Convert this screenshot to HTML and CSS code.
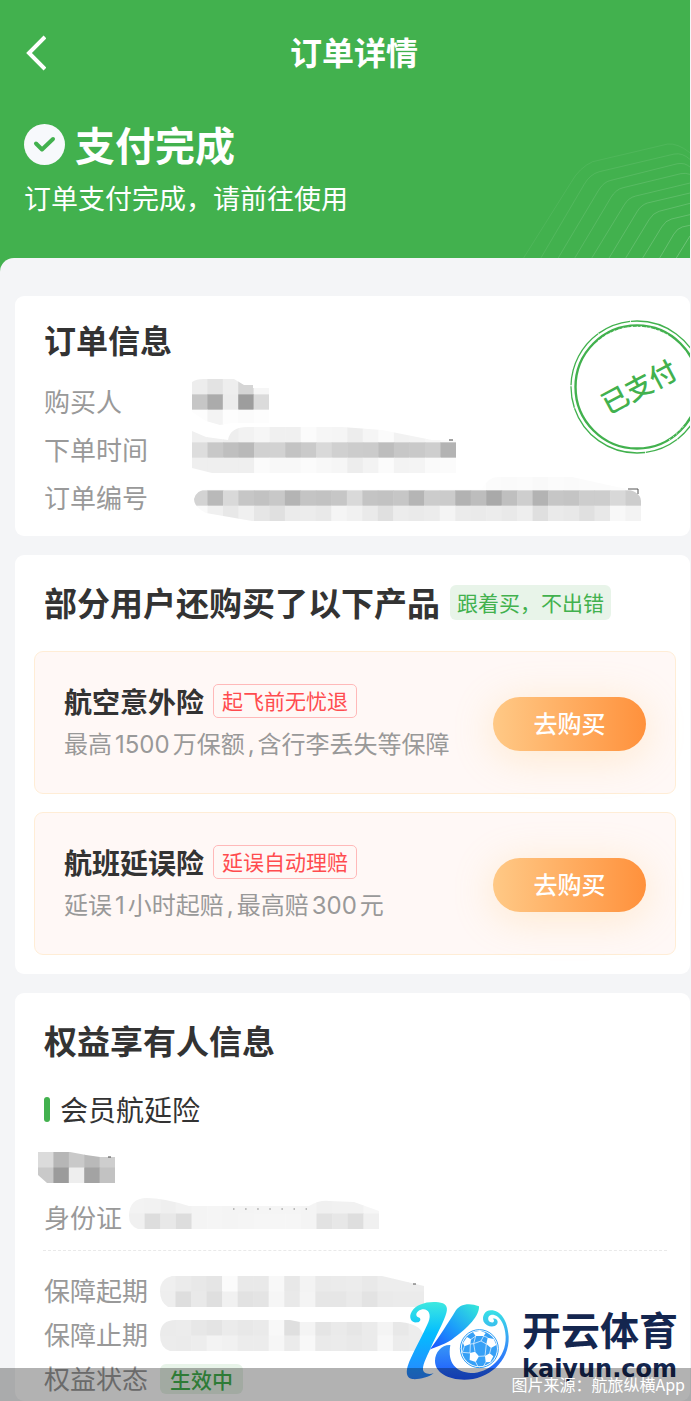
FILE: index.html
```html
<!DOCTYPE html>
<html lang="zh-CN">
  <head>
    <meta charset="UTF-8" />
    <meta name="viewport" content="width=device-width, initial-scale=1.0" />
    <title>订单详情</title>
    <link rel="stylesheet" href="styles.css">
  </head>

  <body>
    <div class="page">
      <header class="header">
        <svg class="header-lines" viewBox="260 60 523 351" fill="none" stroke="#fff" stroke-width="3">
          <path opacity=".07" d="M283 411L425 185Q450 140 490 122L715 69Q745 65 783 95" />
          <path opacity=".09" d="M335 411L465 190Q482 160 510 152L735 99Q760 94 783 115" />
          <path opacity=".11" d="M387 411L508 208Q524 182 545 178L745 128Q768 124 783 138" />
          <path opacity=".12" d="M437 411L545 230Q560 205 582 200L755 158Q770 155 783 160" />
          <path opacity=".13" d="M488 411L585 252Q598 230 620 225L783 186" />
          <path opacity=".15" d="M540 411L624 272Q636 252 655 246L783 216" />
          <path opacity=".16" d="M590 411L660 296Q672 276 690 271L783 247" />
          <path opacity=".18" d="M641 411L698 318Q710 298 728 294L783 281" />
          <path opacity=".2" d="M692 411L734 340Q745 322 760 318L783 313" />
          <path opacity=".24" d="M742 411L783 345" />
        </svg>
        <nav class="nav">
          <button class="back" type="button" aria-label="返回">
            <svg width="20" height="36" viewBox="0 0 20 36" fill="none" stroke="#fff" stroke-width="4">
              <path d="M19 2L3 18L19 34" />
            </svg>
          </button>
          <h1 class="nav-title">订单详情</h1>
        </nav>
        <div class="status">
          <svg width="41" height="41" viewBox="0 0 41 41">
            <circle cx="20.5" cy="20.5" r="20.5" fill="#f7f9fc" />
            <path d="M12 19.5L18 25.5L29 15" fill="none" stroke="#42b14e" stroke-width="4" stroke-linecap="round" stroke-linejoin="round" />
          </svg>
          <h2 class="status-title">支付完成</h2>
        </div>
        <p class="status-text">订单支付完成，请前往使用</p>
      </header>

      <main class="main">
        <section class="card order">
          <h2 class="order-title">订单信息</h2>
          <dl class="rows">
            <div class="row">
              <dt>购买人</dt>
              <dd><svg class="mosaic" width="77" height="46" data-clip="M0 3Q4 0 12 0H42L52 6H61V9H77V44H40L28 46L14 42L0 33Z" data-rows="ed e3 ee d5 f6|c6 ab ec 9d db|fd f3 fd fb fd"></svg></dd>
            </div>
            <div class="row">
              <dt>下单时间</dt>
              <dd><svg class="mosaic" width="264" height="46" data-clip="M0 4L14 10L36 13Q38 0 56 0H150L190 3L240 13H264V46H20L0 41Z" data-rows="f0 f0 ee f2 f6 f0 f0 fb f6 f5 ed f5 fb f2 f3 f6 fb|dd c8 bf b9 d1 d2 c3 ca d9 d0 cc cb bd c7 c9 ce b3|ef ef ef ef fb f8 f8 fb f8 f6 ed f3 fb f3 f4 fa fb"><path d="M257 13H261" stroke="#444" /></svg></dd>
            </div>
            <div class="row">
              <dt>订单编号</dt>
              <dd><svg class="mosaic" width="449" height="46" data-clip="M2 24Q4 15 16 14H290Q296 2 306 2H380L425 12Q449 15 449 26V46H60L14 38Q2 32 2 24Z" data-rows="fe fe fe fe fe fe fe fe fe fe fe fe fe fe fe fe fe fe fe fb fa fb f9 fb fa fb fb fc fe|d3 b9 d9 c6 c2 c8 b4 c4 c2 c6 d9 c4 c2 c6 b5 cc cb b2 bd a9 bf ce b3 c6 c4 cd cd d8 cd|fa f0 e8 f0 e6 e0 eb ec e9 f5 f1 ea e0 ec ea ec f4 eb ea ec e9 ee df ea e8 e0 e8 f8 f3"><path d="M436 14H446V19" fill="none" stroke="#555" /></svg></dd>
            </div>
          </dl>
          <svg class="stamp" width="136" height="136" viewBox="0 0 136 136">
            <g fill="none" stroke="#42b14e">
              <circle cx="68" cy="68" r="66" stroke-width="1.3" stroke-dasharray="60 .6 34 .8 90 .5 22 1" />
              <circle cx="68" cy="68" r="61.5" stroke-width="2.4" />
            </g>
            <g fill="none" stroke="#fff" stroke-dasharray="1.5 4 .7 3">
              <path d="M29 22A60 60 0 0 1 102 18" />
              <path d="M100 121A62 62 0 0 0 116 105" />
            </g>
            <text x="70" y="78" text-anchor="middle" transform="rotate(-28 70 68)">已支付</text>
          </svg>
        </section>

        <section class="card">
          <div class="card-head">
            <h2 class="card-title">部分用户还购买了以下产品</h2>
            <span class="badge">跟着买，不出错</span>
          </div>
          <ul class="products">
            <li class="product">
              <div>
                <div class="product-head">
                  <h3>航空意外险</h3>
                  <span class="tag">起飞前无忧退</span>
                </div>
                <p class="product-desc">最高1500万保额,含行李丢失等保障</p>
              </div>
              <button class="buy" type="button">去购买</button>
            </li>
            <li class="product">
              <div>
                <div class="product-head">
                  <h3>航班延误险</h3>
                  <span class="tag">延误自动理赔</span>
                </div>
                <p class="product-desc">延误1小时起赔,最高赔300元</p>
              </div>
              <button class="buy" type="button">去购买</button>
            </li>
          </ul>
        </section>

        <section class="card holder">
          <div class="card-head">
            <h2 class="card-title">权益享有人信息</h2>
          </div>
          <h3 class="plan">会员航延险</h3>
          <svg class="mosaic holder-name" width="77" height="31" data-clip="M0 0H32L48 3L62 5H77V31H9L0 23Z" data-rows="db b6 c9 b9 ce|c9 9b ee a3 c2"><path d="M70 5H73" stroke="#444" /></svg>
          <dl class="rows rows-tight">
            <div class="row row-id">
              <dt>身份证</dt>
              <dd><svg class="mosaic" width="250" height="31" data-clip="M0 18Q0 0 18 0Q34 0 60 8H180Q190 2 200 3L225 4L250 13V31H9Q0 28 0 18Z" data-rows="f3 f2 ef f2 f4 f5 f4 f4 f5 f5 f5 f4 f0 f1 f1 f6|f0 dd e8 dd f4 f5 f4 f5 f6 f6 f6 f4 e2 e7 de f0"><path d="M104 11H178" stroke="#bbb" stroke-width="2" stroke-dasharray="1.5 10.6" /></svg></dd>
            </div>
          </dl>
          <hr class="divider" />
          <dl class="rows rows-tight">
            <div class="row">
              <dt>保障起期</dt>
              <dd><svg class="mosaic" width="264" height="31" data-clip="M0 15Q0 3 12 0H222L264 10V31H8Q0 26 0 15Z" data-rows="ef eb e8 e5 fb e9 e9 f8 e8 f3 ea eb ec e9 ed ed ed|ee de e9 df f1 e2 e4 f6 e9 f4 e6 e6 ea e3 ea eb eb"><path d="M253 8H256" stroke="#555" /></svg></dd>
            </div>
            <div class="row">
              <dt>保障止期</dt>
              <dd><svg class="mosaic" width="264" height="31" data-clip="M0 15Q0 0 16 0H130L140 2H240Q264 4 264 20V31H10Q0 28 0 15Z" data-rows="eb ec e7 e4 eb e8 ea f8 df f4 e5 ea e6 eb f4 e8 ed|ec eb ed f3 f1 ec ec f6 eb f8 ea eb e9 eb f7 ec ed"></svg></dd>
            </div>
            <div class="row">
              <dt>权益状态</dt>
              <dd><span class="badge badge-small">生效中</span></dd>
            </div>
          </dl>
        </section>
      </main>

      <div class="caption">图片来源：航旅纵横App</div>

      <div class="brand">
        <svg width="115" height="90" viewBox="0 0 345 270">
          <defs>
            <linearGradient id="stem" x1="0" y1="0" x2="0" y2="1">
              <stop offset="0" stop-color="#3fe9e0" />
              <stop offset=".4" stop-color="#04bdff" />
              <stop offset="1" stop-color="#2a83ff" />
            </linearGradient>
            <linearGradient id="arm" x1="1" y1="0" x2="0" y2="1">
              <stop offset="0" stop-color="#36ead8" />
              <stop offset=".5" stop-color="#1c9ffa" />
              <stop offset="1" stop-color="#1b4dff" />
            </linearGradient>
            <linearGradient id="bowl" x1="0" y1="0" x2="0" y2="1">
              <stop offset="0" stop-color="#38e2e6" />
              <stop offset=".45" stop-color="#3a9cf5" />
              <stop offset="1" stop-color="#1b55ff" />
            </linearGradient>
          </defs>
          <path fill="url(#arm)" d="M86 164C112 130 146 76 162 50C174 28 204 22 234 34C236 60 204 98 152 134C124 152 100 156 86 164Z" />
          <path fill="url(#stem)" d="M50 66C62 68 60 82 48 82C30 84 22 66 32 50C44 28 80 18 112 22C134 24 142 36 136 54C130 78 104 124 84 170C70 200 60 222 70 232C78 238 90 238 98 234C84 248 50 254 34 252C18 250 14 236 20 214C30 182 66 120 82 82C94 54 78 38 60 44C46 48 42 60 50 66Z" />
          <path fill="url(#bowl)" d="M148 150C124 148 102 170 102 198C102 232 140 254 190 254C262 254 326 200 323 125C320 75 298 46 270 46C250 46 242 66 248 80C256 95 278 100 288 88C294 78 286 67 275 71C283 76 278 84 270 82C258 79 259 60 272 59C296 58 313 90 314 125C316 190 262 234 210 234C168 232 138 206 148 150Z" />
          <circle cx="235" cy="161" r="60" fill="#fff" />
          <circle cx="235" cy="161" r="57" fill="none" stroke="#2e9df5" stroke-width="3" />
          <circle cx="235" cy="161" r="53" fill="#36a0f6" />
          <g fill="#fff">
            <path d="M216 112L238 107L254 114L248 123L224 123Z" />
            <path d="M186 144L198 126L210 133L208 147L190 154Z" />
            <path d="M260 128L278 132L286 150L270 159L256 147Z" />
            <path d="M207 174L222 170L234 184L224 201L206 195Z" />
            <path d="M252 183L266 175L277 184L268 201L254 202Z" />
          </g>
          <path fill="none" stroke="#fff" stroke-width="2" d="M224 123L218 146M248 123L240 138M248 123L260 128M208 147L218 146L240 138L256 147M208 147L207 174M218 146L222 170M256 147L252 183M270 159L266 175M224 123L210 133M234 184L252 183M224 201L230 213M254 202L248 213M190 154L184 172L207 174" />
        </svg>
        <div class="brand-text">
          <strong class="brand-name">开云体育</strong>
          <span class="brand-site">kaiyun.com</span>
        </div>
      </div>
    </div>

    <script>
      const ns = "http://www.w3.org/2000/svg";

      // masked fields: one grey per cell, rows split by |
      document.querySelectorAll(".mosaic").forEach(function (svg, n) {
        const w = Number(svg.getAttribute("width"));
        const h = Number(svg.getAttribute("height"));
        const rows = svg.dataset.rows.split("|");
        const clip = document.createElementNS(ns, "clipPath");
        const shape = document.createElementNS(ns, "path");
        const group = document.createElementNS(ns, "g");

        clip.id = "mask" + n;
        shape.setAttribute("d", svg.dataset.clip);
        clip.appendChild(shape);
        group.setAttribute("clip-path", "url(#mask" + n + ")");

        rows.forEach(function (row, y) {
          const cells = row.split(" ");
          cells.forEach(function (grey, x) {
            const rect = document.createElementNS(ns, "rect");
            rect.setAttribute("x", (x * w) / cells.length);
            rect.setAttribute("y", (y * h) / rows.length);
            rect.setAttribute("width", w / cells.length + 0.5);
            rect.setAttribute("height", h / rows.length + 0.5);
            rect.setAttribute("fill", "#" + grey + grey + grey);
            group.appendChild(rect);
          });
        });
        svg.prepend(clip, group);
      });
    </script>
  </body>
</html>
```
FILE: styles.css
```css
* {
  margin: 0;
  padding: 0;
  box-sizing: border-box;
}

body {
  background: #f4f5f7;
  color: #333;
  font-family: "Noto Sans CJK SC", sans-serif;
}

ul {
  list-style: none;
}

svg {
  display: block;
  flex: none;
}

button {
  border: none;
  background: none;
  font-family: inherit;
  cursor: pointer;
}

.page {
  position: relative;
  min-height: 100vh;
  padding-right: 1px;
  overflow: hidden;
}

/* header */
.header {
  position: relative;
  padding: 30px 0 56px;
  background: #42b14e;
  color: #fff;
}

.header-lines {
  position: absolute;
  right: 0;
  bottom: 14px;
  width: 174px;
  height: 117px;
}

.nav {
  display: flex;
  align-items: center;
  padding: 0 28px 0 26px;
}

.back {
  width: 20px;
}

.nav-title {
  flex: 1;
  padding-bottom: 4px;
  text-align: center;
  font-size: 32px;
  font-weight: 700;
  line-height: 42px;
}

.status {
  display: flex;
  align-items: center;
  gap: 10px;
  margin-top: 44px;
  padding: 0 24px;
}

.status-title {
  font-size: 40px;
  font-weight: 700;
  line-height: 48px;
}

.status-text {
  margin-top: 12px;
  padding: 0 24px;
  font-size: 27px;
  font-weight: 400;
  line-height: 36px;
}

/* cards */
.main {
  position: relative;
  display: flex;
  flex-direction: column;
  gap: 19px;
  margin-top: -14px;
  padding: 38px 0 0 15px;
  background: #f4f5f7;
  border-top-left-radius: 14px;
}

.card {
  position: relative;
  padding: 25px 14px 19px 19px;
  background: #fff;
  border-radius: 9px;
  overflow: hidden;
}

.order {
  padding: 21px 14px 14px 29px;
}

.order-title {
  margin-bottom: 17px;
  font-size: 32px;
  font-weight: 700;
  line-height: 44px;
}

.card-head {
  display: flex;
  align-items: center;
  gap: 10px;
  margin-bottom: 27px;
  padding-left: 10px;
}

.card-title {
  font-size: 33px;
  font-weight: 700;
  line-height: 44px;
}

.badge {
  padding: 0 7px;
  border-radius: 6px;
  background: #e8f4e9;
  color: #42b14e;
  font-size: 21px;
  line-height: 35px;
}

.badge-small {
  display: block;
  padding: 0 10px;
  font-weight: 500;
  line-height: 30px;
}

.row {
  display: flex;
  align-items: center;
  height: 48px;
  color: #999;
  font-size: 26px;
}

.row dt {
  width: 148px;
  padding-bottom: 4px;
}

.stamp {
  position: absolute;
  top: 23px;
  right: -15px;
}

.stamp text {
  fill: #42b14e;
  font-size: 27px;
  font-weight: 500;
}

/* products */
.products {
  display: grid;
  gap: 18px;
}

.product {
  display: flex;
  align-items: center;
  justify-content: space-between;
  padding: 32px 29px 30px;
  border: 1px solid #ffedd6;
  border-radius: 9px;
  background: #fff8f6;
}

.product-head {
  display: flex;
  align-items: center;
  gap: 9px;
}

.product-head h3 {
  font-size: 28px;
  font-weight: 700;
  line-height: 34px;
}

.tag {
  padding: 0 8px 2px;
  border: 1px solid #ffb9b9;
  border-radius: 5px;
  color: #ff4c4f;
  font-size: 21px;
  line-height: 30px;
}

.product-desc {
  margin-top: 9px;
  color: #999;
  font-family: Inter, "Noto Sans CJK SC", sans-serif;
  font-size: 24px;
  line-height: 36px;
  text-autospace: normal;
}

.buy {
  width: 153px;
  height: 54px;
  padding-bottom: 3px;
  border-radius: 27px;
  background: linear-gradient(90deg, #ffc986, #ff913c);
  box-shadow: 0 6px 40px rgba(255, 200, 110, 0.3);
  color: #fff;
  font-size: 24px;
  font-weight: 500;
}

/* holder */
.holder {
  padding-bottom: 0;
}

.plan {
  display: flex;
  align-items: center;
  gap: 10px;
  padding-left: 10px;
  font-size: 28px;
  font-weight: 400;
  line-height: 40px;
}

.plan::before {
  content: "";
  width: 6px;
  height: 25px;
  border-radius: 3px;
  background: #42b14e;
}

.holder-name {
  margin: 23px 0 13px 4px;
}

.rows-tight {
  padding-left: 10px;
}

.rows-tight .row {
  height: 44px;
  gap: 12px;
}

.rows-tight .row-id {
  gap: 7px;
}

.row-id dd {
  padding-bottom: 9px;
}

.rows-tight dt {
  width: auto;
}

.divider {
  margin: 10px 9px 18px;
  border: none;
  border-top: 1px dashed #e9e9e9;
}

/* bottom caption and brand */
.caption {
  position: absolute;
  left: 0;
  right: 0;
  bottom: 0;
  z-index: 2;
  padding: 0 6px;
  background: rgba(0, 0, 0, 0.3);
  color: #fff;
  text-align: right;
  font-family: "Noto Sans CJK TC", sans-serif;
  font-size: 16px;
  font-weight: 400;
  line-height: 33px;
}

.brand {
  position: absolute;
  right: 13px;
  bottom: 16px;
  z-index: 1;
  display: flex;
  align-items: center;
  gap: 6px;
  color: #14264f;
}

.brand-text {
  display: grid;
  gap: 5px;
  padding-top: 8px;
}

.brand-name {
  font-size: 39px;
  font-weight: 700;
  line-height: 44px;
}

.brand-site {
  font-family: "DejaVu Sans", sans-serif;
  font-size: 24px;
  font-weight: 700;
  line-height: 28px;
}
```
